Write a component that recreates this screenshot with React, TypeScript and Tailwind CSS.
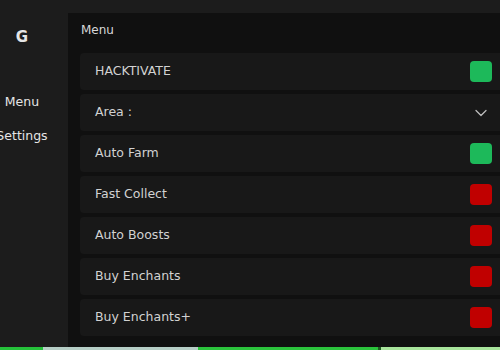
import { ChevronDown } from 'lucide-react'

const rows: { label: string; kind: 'on' | 'off' | 'select' }[] = [
  { label: 'HACKTIVATE', kind: 'on' },
  { label: 'Area :', kind: 'select' },
  { label: 'Auto Farm', kind: 'on' },
  { label: 'Fast Collect', kind: 'off' },
  { label: 'Auto Boosts', kind: 'off' },
  { label: 'Buy Enchants', kind: 'off' },
  { label: 'Buy Enchants+', kind: 'off' },
]

function Row({ label, kind }: { label: string; kind: 'on' | 'off' | 'select' }) {
  return (
    <div className="h-[37px] flex items-center justify-between pl-[15px] pr-[8px] bg-[#181818] rounded-l-[4px]">
      <span className="text-[12.5px] text-[#d2d2d2] leading-none">{label}</span>
      {kind === 'select' ? (
        <ChevronDown size={20} strokeWidth={1.5} className="text-[#bdbdbd] mr-[1px]" />
      ) : (
        <div className={`w-[22px] h-[21px] rounded-[4px] ${kind === 'on' ? 'bg-[#1db95a]' : 'bg-[#c00000]'}`} />
      )}
    </div>
  )
}

export default function App() {
  return (
    <div
      className="w-[500px] h-[350px] bg-[#1c1c1c] flex flex-col overflow-hidden"
      style={{ fontFamily: '"DejaVu Sans", sans-serif' }}
    >
      <div className="flex-1 flex min-h-0">
        <div className="w-[68px] shrink-0">
          <div className="w-[44px] flex flex-col items-center pt-[29px] text-[#e6e6e6] whitespace-nowrap">
            <div className="text-[15px] font-bold leading-[17px]">G</div>
            <div className="text-[12.5px] leading-[17px] mt-[47px]">Menu</div>
            <div className="text-[12.5px] leading-[17px] mt-[17px]">Settings</div>
          </div>
        </div>
        <div className="flex-1 mt-[13px] bg-[#101010] flex flex-col">
          <div className="pl-[13px] pt-[9px] text-[12px] leading-[16px] text-[#d8d8d8]">Menu</div>
          <div className="ml-[12px] mt-[15px] flex flex-col gap-[4px]">
            {rows.map(r => (
              <Row key={r.label} label={r.label} kind={r.kind} />
            ))}
          </div>
        </div>
      </div>
      <div className="h-[3px] flex shrink-0">
        <div className="w-[43px] bg-[#25c23a]" />
        <div className="w-[155px] bg-[#b6cec6]" />
        <div className="w-[180px] bg-[#2bc43c]" />
        <div className="w-[3px] bg-[#1f5e22]" />
        <div className="flex-1 bg-[#a8e59c]" />
      </div>
    </div>
  )
}
